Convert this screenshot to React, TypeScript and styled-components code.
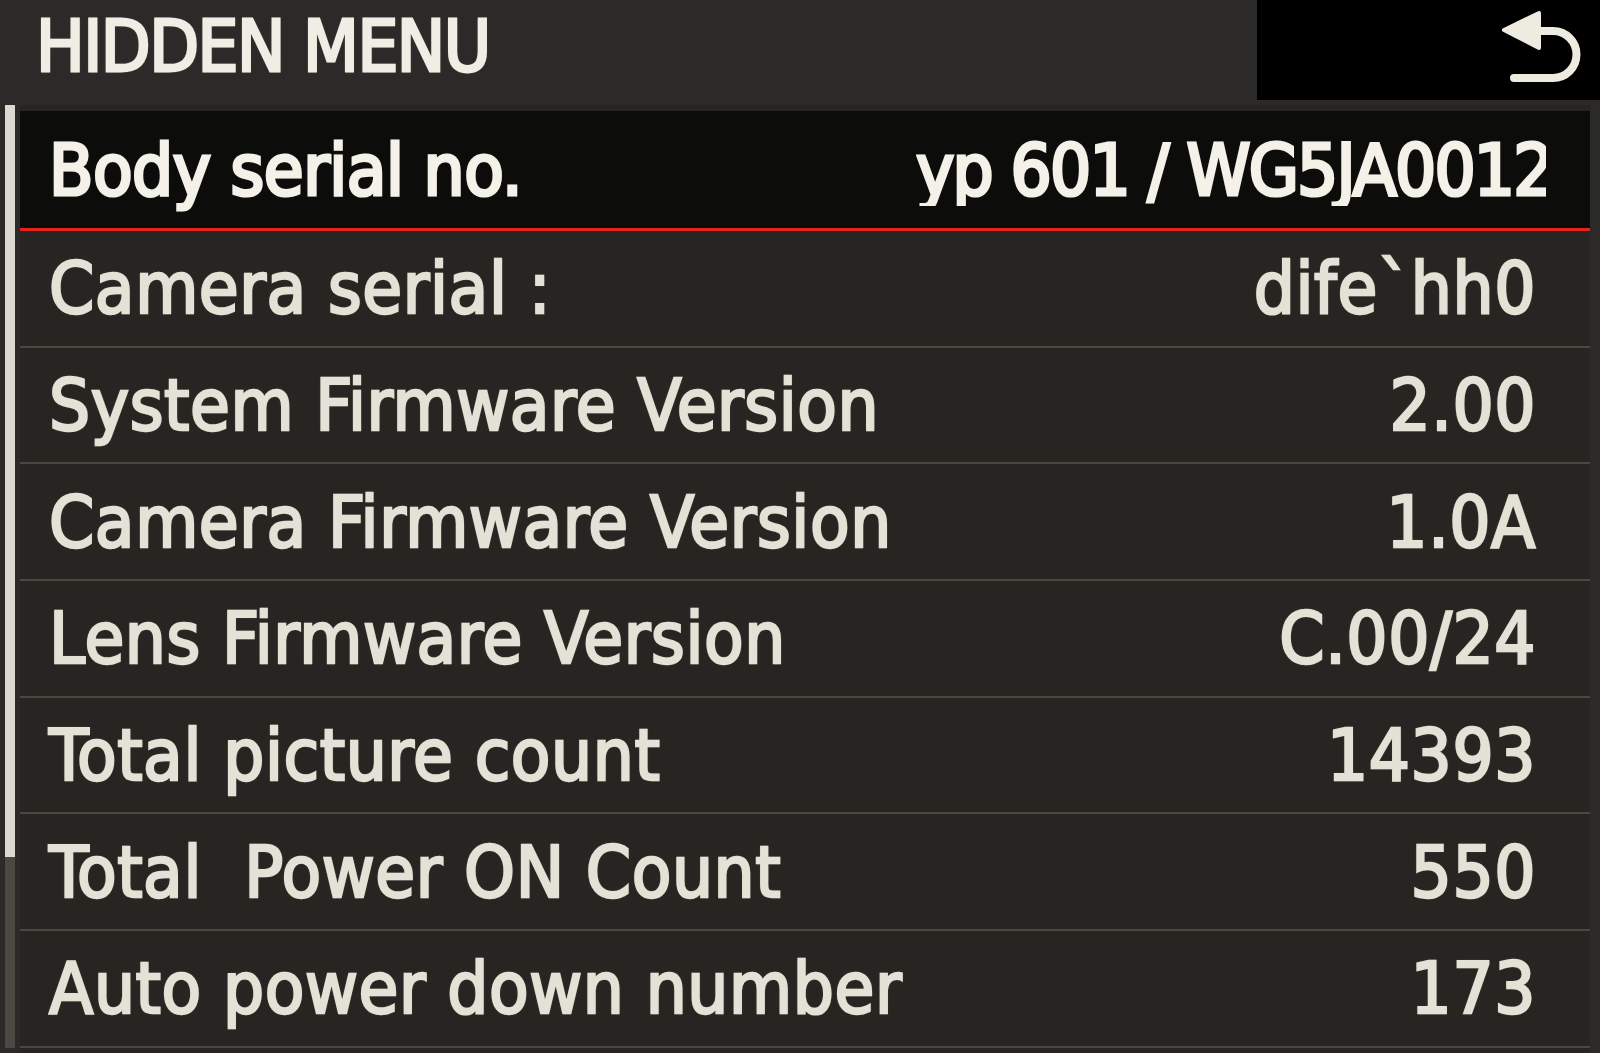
import React from "react";
import styled, { createGlobalStyle } from "styled-components";

const Global = createGlobalStyle`
  html, body { margin: 0; padding: 0; background: #272624; }
  #root { width: 1600px; height: 1053px; overflow: hidden; }
`;

const Screen = styled.div`
  width: 1600px;
  height: 1053px;
  display: grid;
  grid-template-rows: 105px 1fr;
  background: #282725;
  font-family: "DejaVu Sans Condensed", "DejaVu Sans", sans-serif;
  font-stretch: condensed;
  color: #e8e6da;
`;

const Header = styled.header`
  display: flex;
  align-items: flex-start;
  background: #2b2a28;
`;

const Title = styled.h1`
  flex: 1;
  margin: 10px 0 0 36px;
  font-size: 72px;
  line-height: 1;
  font-weight: 400;
  letter-spacing: -1.5px;
  -webkit-text-stroke: 2.8px #f0eee4;
  color: #f0eee4;
  text-shadow: 0 0 3px rgba(255, 250, 230, 0.35);
`;

const BackBox = styled.div`
  width: 343px;
  height: 100px;
  background: #000;
  display: flex;
  align-items: center;
  justify-content: flex-end;
  padding-right: 10px;
  box-sizing: border-box;
`;

const Body = styled.div`
  display: flex;
  gap: 5px;
  padding-left: 5px;
  background: #2b2a28;
`;

const Scrollbar = styled.div`
  width: 10px;
  height: 943px;
  background: #4a4843;
  display: flex;
  flex-direction: column;
`;

const Thumb = styled.div`
  height: 752px;
  background: #dcdad0;
`;

const List = styled.ul`
  list-style: none;
  margin: 0;
  padding: 6px 0 0 0;
  width: 1570px;
  display: flex;
  flex-direction: column;
  background: #262522;
`;

const Row = styled.li<{ $selected?: boolean }>`
  box-sizing: border-box;
  flex: none;
  height: ${(p) => (p.$selected ? "120px" : "116.7px")};
  display: flex;
  align-items: center;
  justify-content: space-between;
  padding: 0 54px 0 29px;
  background: ${(p) => (p.$selected ? "#0c0c0b" : "#262522")};
  border-bottom: ${(p) => (p.$selected ? "3px solid #e5221c" : "2px solid #4c4740")};
  font-size: 72px;
  line-height: 1;
  white-space: pre;
`;

const Label = styled.span<{ $selected?: boolean }>`
  letter-spacing: ${(p) => (p.$selected ? "-0.5px" : "0.6px")};
  color: ${(p) => (p.$selected ? "#f4f2e8" : "#e4e2d6")};
  -webkit-text-stroke: ${(p) => (p.$selected ? "3.2px" : "2.4px")} currentColor;
  text-shadow: 0 0 3px rgba(255, 250, 225, 0.3);
`;

const Value = styled(Label)`
  text-align: right;
`;

const Marquee = styled.div`
  width: 630px;
  margin-right: -10px;
  overflow: hidden;
  display: flex;
  justify-content: flex-start;

  ${Value} {
    letter-spacing: -1.8px;
  }
`;

const rows: { label: string; value: string }[] = [
  { label: "Camera serial :", value: "dife`hh0" },
  { label: "System Firmware Version", value: "2.00" },
  { label: "Camera Firmware Version", value: "1.0A" },
  { label: "Lens Firmware Version", value: "C.00/24" },
  { label: "Total picture count", value: "14393" },
  { label: "Total  Power ON Count", value: "550" },
  { label: "Auto power down number", value: "173" },
];

const BackIcon = () => (
  <svg width="95" height="90" viewBox="0 0 95 90" fill="none">
    <path
      d="M40 26 H58 A23.5 23.5 0 0 1 58 73 H19"
      stroke="#eeebe0"
      strokeWidth="8"
      strokeLinecap="round"
      strokeLinejoin="round"
    />
    <polygon
      points="9,25 44,8 44,43"
      fill="#eeebe0"
      stroke="#eeebe0"
      strokeWidth="4"
      strokeLinejoin="round"
    />
  </svg>
);

export default function App() {
  return (
    <>
      <Global />
      <Screen>
        <Header>
          <Title>HIDDEN MENU</Title>
          <BackBox>
            <BackIcon />
          </BackBox>
        </Header>
        <Body>
          <Scrollbar>
            <Thumb />
          </Scrollbar>
          <List>
            <Row $selected>
              <Label $selected>Body serial no.</Label>
              <Marquee>
                <Value $selected>yp 601 / WG5JA00123</Value>
              </Marquee>
            </Row>
            {rows.map((r) => (
              <Row key={r.label}>
                <Label>{r.label}</Label>
                <Value>{r.value}</Value>
              </Row>
            ))}
          </List>
        </Body>
      </Screen>
    </>
  );
}
